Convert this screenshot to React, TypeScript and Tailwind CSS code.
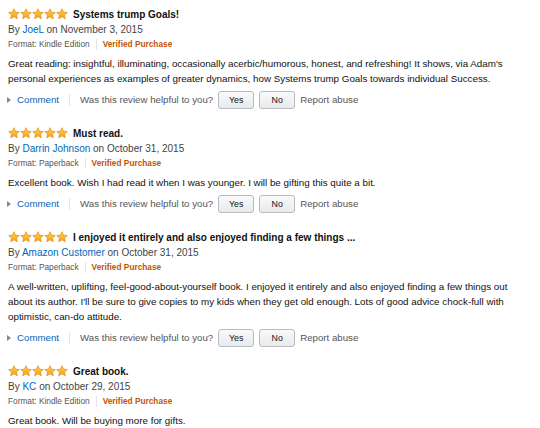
import React from 'react';

type Review = {
  title: string;
  author: string;
  date: string;
  format: string;
  body: string[];
};

// body is kept as the lines shown in the listing so wrapping matches
const reviews: Review[] = [
  {
    title: 'Systems trump Goals!',
    author: 'JoeL',
    date: 'November 3, 2015',
    format: 'Kindle Edition',
    body: [
      "Great reading: insightful, illuminating, occasionally acerbic/humorous, honest, and refreshing! It shows, via Adam's",
      'personal experiences as examples of greater dynamics, how Systems trump Goals towards individual Success.',
    ],
  },
  {
    title: 'Must read.',
    author: 'Darrin Johnson',
    date: 'October 31, 2015',
    format: 'Paperback',
    body: ['Excellent book. Wish I had read it when I was younger. I will be gifting this quite a bit.'],
  },
  {
    title: 'I enjoyed it entirely and also enjoyed finding a few things ...',
    author: 'Amazon Customer',
    date: 'October 31, 2015',
    format: 'Paperback',
    body: [
      'A well-written, uplifting, feel-good-about-yourself book. I enjoyed it entirely and also enjoyed finding a few things out',
      "about its author. I'll be sure to give copies to my kids when they get old enough. Lots of good advice chock-full with",
      'optimistic, can-do attitude.',
    ],
  },
  {
    title: 'Great book.',
    author: 'KC',
    date: 'October 29, 2015',
    format: 'Kindle Edition',
    body: ['Great book. Will be buying more for gifts.'],
  },
];

function Star() {
  return (
    <svg width="12" height="12" viewBox="0 0 24 24" className="block">
      <defs>
        <linearGradient id="starFill" x1="0" y1="0" x2="0" y2="1">
          <stop offset="0" stopColor="#ffce3d" />
          <stop offset="1" stopColor="#f7a21b" />
        </linearGradient>
      </defs>
      <polygon
        points="12,1.5 15.1,8.4 22.6,9.1 16.9,14.1 18.6,21.5 12,17.6 5.4,21.5 7.1,14.1 1.4,9.1 8.9,8.4"
        fill="url(#starFill)"
        stroke="#e2891a"
        strokeWidth="1.4"
        strokeLinejoin="round"
      />
    </svg>
  );
}

function Stars() {
  return (
    <div className="flex items-center">
      {[0, 1, 2, 3, 4].map((i) => (
        <Star key={i} />
      ))}
    </div>
  );
}

function VoteButton({ label }: { label: string }) {
  return (
    <button className="h-[18px] w-[36px] rounded-[3px] border border-[#b8bbc0] bg-gradient-to-b from-[#f8f9fa] to-[#e9eaec] text-[8.8px] text-[#111] leading-none">
      {label}
    </button>
  );
}

function ReviewItem({ review }: { review: Review }) {
  return (
    <div className="mb-[16px]">
      {/* Stars + title */}
      <div className="flex h-[16px] items-center gap-[5px]">
        <Stars />
        <span className="text-[10px] font-bold text-[#111]">{review.title}</span>
      </div>

      {/* Byline */}
      <div className="text-[10px] leading-[15px] text-[#444]">
        By <a className="text-[#0066c0]">{review.author}</a> on {review.date}
      </div>

      {/* Format + verified */}
      <div className="flex items-center text-[8.3px] leading-[15px]">
        <span className="text-[#555]">Format: {review.format}</span>
        <span className="mx-[6px] h-[11px] w-px bg-[#e3e3e3]" />
        <span className="font-bold text-[#c45500]">Verified Purchase</span>
      </div>

      {/* Body */}
      <p className="mt-[4px] text-[9.8px] leading-[15px] text-[#111]">
        {review.body.map((line, i) => (
          <span key={i} className="block whitespace-nowrap">
            {line}
          </span>
        ))}
      </p>

      {/* Actions */}
      <div className="mt-[5px] flex h-[18px] items-center text-[9.7px] text-[#333]">
        <span className="ml-[-1px] mr-[6px] inline-block h-0 w-0 border-y-[3px] border-l-[4px] border-y-transparent border-l-[#888]" />
        <a className="text-[#0066c0]">Comment</a>
        <span className="mx-[10px] h-[12px] w-px bg-[#e3e3e3]" />
        <span className="mr-[5px] text-[#555]">Was this review helpful to you?</span>
        <div className="flex gap-[5px]">
          <VoteButton label="Yes" />
          <VoteButton label="No" />
        </div>
        <span className="ml-[5px] text-[#555]">Report abuse</span>
      </div>
    </div>
  );
}

export default function App() {
  return (
    <div
      className="h-[428px] w-[540px] overflow-hidden bg-white pl-[8px] pr-[4px] pt-[6px]"
      style={{ fontFamily: '"Liberation Sans", Arial, sans-serif' }}
    >
      {reviews.map((r) => (
        <ReviewItem key={r.title} review={r} />
      ))}
    </div>
  );
}
